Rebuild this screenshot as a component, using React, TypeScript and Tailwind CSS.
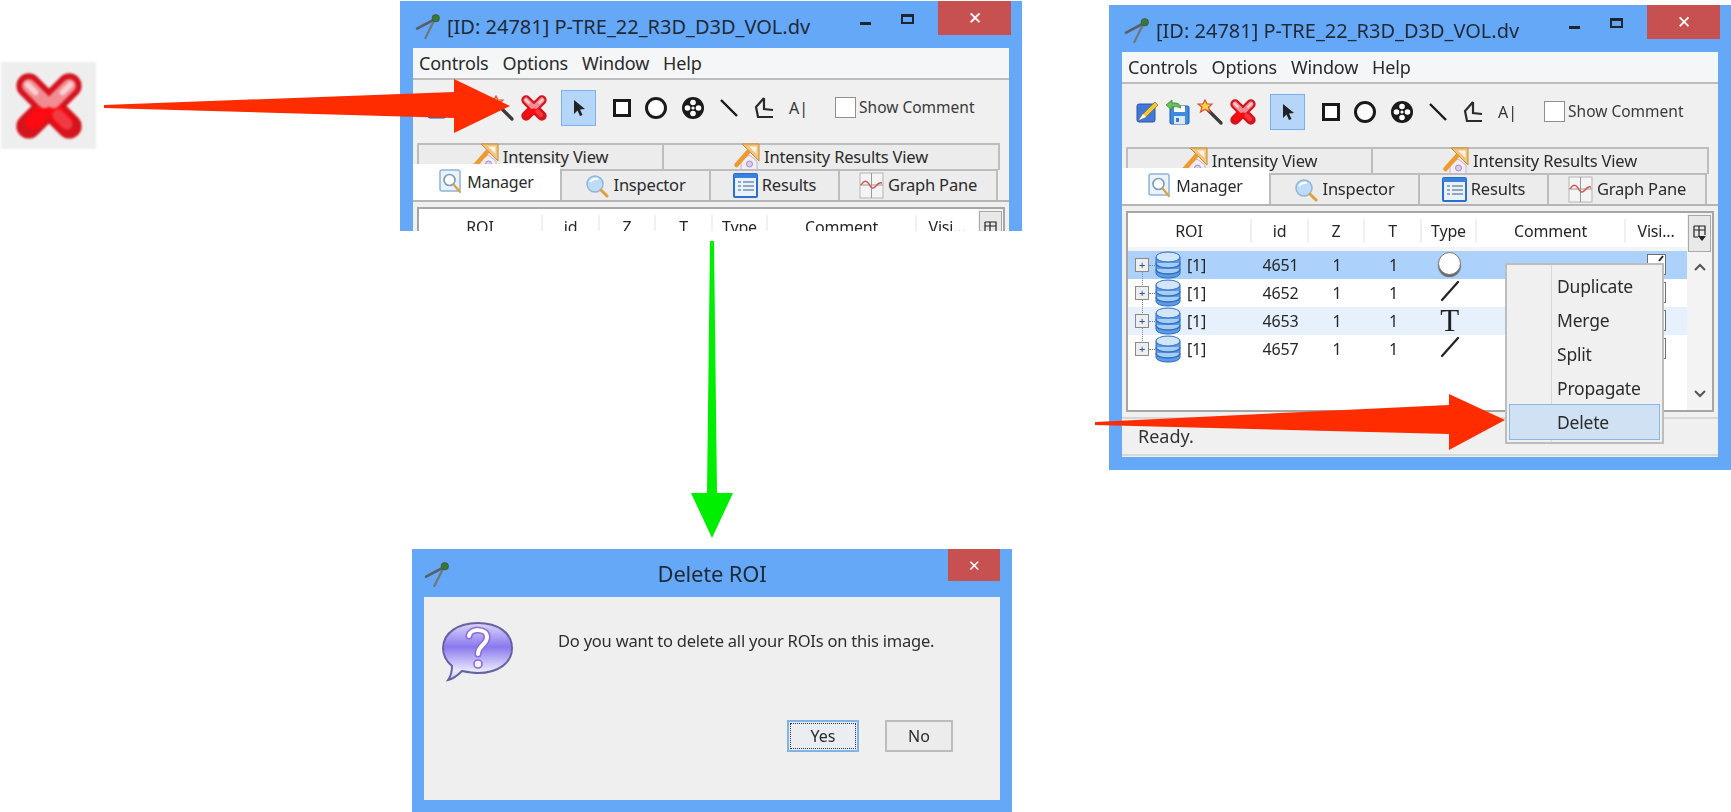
import { FC, ReactNode } from 'react';

const Logo: FC = () => (
  <svg width="27" height="27" viewBox="0 0 26 26" className="shrink-0">
    <path d="M19 6 L2 15" stroke="#56606a" strokeWidth="2.6" strokeLinecap="round" />
    <path d="M19 6 L10 24" stroke="#6d7780" strokeWidth="2.2" strokeLinecap="round" />
    <circle cx="20" cy="5" r="3.4" fill="#2f7d32" stroke="#4a5a4a" />
  </svg>
);

const RedX: FC<{ size: number }> = ({ size }) => (
  <svg width={size} height={size} viewBox="0 0 32 32" className="shrink-0">
    <path d="M7 7 L25 25 M25 7 L7 25" stroke="#d5141e" strokeWidth="11" strokeLinecap="round" />
    <path d="M9 23 L16 16 L23 23" stroke="#ff0a10" strokeWidth="7" strokeLinecap="round" strokeLinejoin="round" fill="none" />
    <path d="M24 24 L20 20" stroke="#f03a44" strokeWidth="5" strokeLinecap="round" />
    <path d="M7 7 L14 14 M25 7 L18 14" stroke="#f18c92" strokeWidth="6" strokeLinecap="round" />
    <path d="M6.5 6.5 L10 10 M25.5 6.5 L22 10" stroke="#fbd0d3" strokeWidth="2.6" strokeLinecap="round" />
  </svg>
);

const EditIcon: FC = () => (
  <svg width="24" height="24" viewBox="0 0 24 24" className="shrink-0">
    <rect x="2" y="4" width="18" height="18" rx="2" fill="#3f78d6" stroke="#2a55a8" />
    <path d="M4 20 L8 14 L20 2 L23 5 L11 17 Z" fill="#f4c63c" stroke="#9c7a18" strokeWidth="0.8" />
    <path d="M4 20 L8 14 L11 17 Z" fill="#ffffff" />
  </svg>
);

const SaveIcon: FC = () => (
  <svg width="26" height="26" viewBox="0 0 26 26" className="shrink-0">
    <rect x="5" y="7" width="19" height="18" rx="1.5" fill="#3f8be0" stroke="#1f5bb0" />
    <rect x="9" y="7" width="11" height="6" fill="#ffffff" />
    <rect x="9" y="17" width="11" height="8" fill="#dbe9f7" />
    <rect x="11" y="19" width="3" height="4" fill="#3f78c6" />
    <path d="M1 6 L7 1 L7 4 Q15 3 16 9 Q12 7 7 8 L7 11 Z" fill="#66c05c" stroke="#3b8a38" strokeWidth="0.8" />
  </svg>
);

const WandIcon: FC = () => (
  <svg width="26" height="26" viewBox="0 0 26 26" className="shrink-0">
    <path d="M11 11 L24 24" stroke="#3b3b3b" strokeWidth="3.2" strokeLinecap="round" />
    <path d="M8 1 L10 5 L15 5 L11.5 8.5 L13 13 L8 10.5 L3.5 13 L5 8 L1 5 L6 5 Z" fill="#fbd63a" stroke="#d8503a" strokeWidth="1.2" />
  </svg>
);

const MagnifierBox: FC = () => (
  <svg width="24" height="26" viewBox="0 0 24 26" className="shrink-0">
    <rect x="1" y="1" width="20" height="21" rx="2" fill="#eaf2fb" stroke="#8db4dc" strokeWidth="1.5" />
    <circle cx="10.5" cy="11" r="5.5" fill="#ffffff" stroke="#7f9bb8" strokeWidth="1.6" />
    <path d="M15 16 L21 23" stroke="#e0a040" strokeWidth="2.2" strokeLinecap="round" />
  </svg>
);

const MagnifierIcon: FC = () => (
  <svg width="24" height="24" viewBox="0 0 24 24" className="shrink-0">
    <circle cx="10" cy="10" r="8" fill="#bcdcf7" stroke="#8fb6d8" strokeWidth="1.5" />
    <path d="M5 8 Q8 4 13 5" stroke="#ffffff" strokeWidth="2" fill="none" />
    <path d="M16 16 L22 22" stroke="#e0a040" strokeWidth="3" strokeLinecap="round" />
  </svg>
);

const TableIcon: FC = () => (
  <svg width="25" height="25" viewBox="0 0 25 25" className="shrink-0">
    <rect x="1" y="1" width="23" height="23" rx="1" fill="#e9f1fb" stroke="#2a6fd0" strokeWidth="2" />
    <rect x="1" y="1" width="23" height="4" fill="#3b82dc" />
    <path d="M5 9 H8 M5 13 H8 M5 17 H8 M10 9 H21 M10 13 H21 M10 17 H21" stroke="#7a8ea8" strokeWidth="1.6" />
  </svg>
);

const GraphIcon: FC = () => (
  <svg width="25" height="27" viewBox="0 0 25 27" className="shrink-0">
    <rect x="1" y="1" width="23" height="25" fill="#f4f4f4" stroke="#b5b5b5" />
    <path d="M12.5 1 V26 M1 13 H24" stroke="#9a9a9a" />
    <path d="M2 13 Q6 6 10 12 Q13 19 17 14 Q20 10 23 11" stroke="#d9534f" strokeWidth="1.4" fill="none" />
  </svg>
);

const RulerIcon: FC = () => (
  <svg width="26" height="27" viewBox="0 0 26 27" className="shrink-0 -mt-[3px]">
    <path d="M7 27 V18 L15 12 L23 18 V27 Z" fill="#f3edf3" stroke="#c5b4cc" />
    <circle cx="15.5" cy="21" r="3" fill="#dccdea" stroke="#a08fbd" />
    <path d="M8 1 H25 V18 Z" fill="#f2c47e" stroke="#c98a30" />
    <path d="M15 3.5 H22.5 V11 Z" fill="#fbf4e6" />
    <path d="M2.5 22 L14 9" stroke="#ee9a2e" strokeWidth="4.5" strokeLinecap="round" />
  </svg>
);

const Db: FC = () => (
  <svg width="26" height="28" viewBox="0 0 26 28" className="shrink-0">
    <path d="M1 6 V22 C1 25 6 27 13 27 C20 27 25 25 25 22 V6 Z" fill="#5a9ae6" stroke="#2f6fc0" />
    <path d="M1 12 C1 15 6 17 13 17 C20 17 25 15 25 12" fill="#a8cdf5" stroke="#2f6fc0" strokeWidth="1.4" />
    <path d="M1 18 C1 21 6 23 13 23 C20 23 25 21 25 18" fill="#a8cdf5" stroke="#2f6fc0" strokeWidth="1.4" />
    <ellipse cx="13" cy="6" rx="12" ry="5" fill="#d4e6fb" stroke="#2f6fc0" />
  </svg>
);

const Tab: FC<{ icon: ReactNode; label: string; className: string }> = ({ icon, label, className }) => (
  <div className={`flex items-center justify-center gap-1 text-[#2b2b2b] ${className}`}>
    {icon}
    <span>{label}</span>
  </div>
);

const rows = [
  { id: '4651', type: 'circle', bg: 'bg-[#acd2fb]', check: true },
  { id: '4652', type: 'line', bg: 'bg-white', check: false },
  { id: '4653', type: 'text', bg: 'bg-[#e6f1fd]', check: false },
  { id: '4657', type: 'line', bg: 'bg-white', check: false },
];

const TypeCell: FC<{ type: string }> = ({ type }) => {
  if (type === 'circle')
    return <div className="w-[23px] h-[23px] rounded-full bg-white border border-[#777] -mt-1 shadow-[0_2px_1px_#666]" />;
  if (type === 'text')
    return <span className="font-['Liberation_Serif',serif] text-[31px] leading-[26px] text-[#222]">T</span>;
  return (
    <svg width="20" height="22" viewBox="0 0 20 22" className="-mt-1">
      <path d="M2 20 L18 2" stroke="#222" strokeWidth="2.2" strokeLinecap="round" />
    </svg>
  );
};

const ManagerWindow: FC<{ className: string }> = ({ className }) => (
  <div className={`absolute w-[622px] bg-[#66a8f8] overflow-hidden flex flex-col font-['Noto_Sans',sans-serif] blur-[0.5px] ${className}`}>
    <div className="h-[47px] shrink-0 flex items-start pl-[15px] pr-[11px]">
      <div className="mt-[12px]"><Logo /></div>
      <span className="ml-[5px] mt-[11px] text-[20px] leading-[30px] text-[#1f2a36] whitespace-nowrap">[ID: 24781] P-TRE_22_R3D_D3D_VOL.dv</span>
      <div className="ml-[50px] mt-[21px] w-[11px] h-[3px] bg-[#1d2530]" />
      <div className="ml-[30px] mt-[13px] w-[13px] h-[10px] border-2 border-t-[3px] border-[#1d2530]" />
      <div className="ml-auto w-[73px] h-[34px] bg-[#c75050] flex items-center justify-center text-white text-[17px]">✕</div>
    </div>
    <div className="mx-[13px] flex flex-col bg-[#f0f0f0] h-[405px]">
      <div className="h-[32px] shrink-0 bg-[#f5f6f7] border-b-2 border-[#bcbcbc] flex items-center gap-[14px] pl-[6px] text-[18px] text-[#2a2a2a] tracking-[-0.2px]">
        <span>Controls</span><span>Options</span><span>Window</span><span>Help</span>
      </div>
      <div className="h-[63px] shrink-0 flex items-center pl-[13px] pb-[8px]">
        <div className="flex items-center gap-[6px] w-[135px]">
          <EditIcon /><SaveIcon /><WandIcon /><RedX size={28} />
        </div>
        <div className="w-[35px] h-[36px] bg-[#b5d6f9] border border-[#79b3ef] flex items-center justify-center">
          <svg width="14" height="18" viewBox="0 0 14 18"><path d="M2 1 L2 15 L5.5 11.5 L8 17 L10.5 16 L8 10.5 L13 10 Z" fill="#222" /></svg>
        </div>
        <div className="ml-[17px] flex items-center gap-[14px]">
          <div className="w-[18px] h-[18px] border-[3px] border-[#1a1a1a] bg-white" />
          <div className="w-[22px] h-[22px] rounded-full border-[3px] border-[#1a1a1a] bg-white" />
          <svg width="24" height="24" viewBox="0 0 24 24">
            <circle cx="12" cy="12" r="11" fill="#1a1a1a" />
            <circle cx="12" cy="6.5" r="2.8" fill="#fff" /><circle cx="12" cy="17.5" r="2.8" fill="#fff" />
            <circle cx="6.5" cy="12" r="2.8" fill="#fff" /><circle cx="17.5" cy="12" r="2.8" fill="#fff" />
            <circle cx="12" cy="12" r="1.6" fill="#fff" />
          </svg>
          <svg width="20" height="20" viewBox="0 0 20 20"><path d="M2 2 L18 18" stroke="#1a1a1a" strokeWidth="2.4" /></svg>
          <svg width="22" height="24" viewBox="0 0 22 24"><path d="M11 2 L3 11 L5 21 L20 21 M11 2 L11 13 L20 14" stroke="#2a2a2a" strokeWidth="2.2" fill="none" /></svg>
          <span className="text-[16px] text-[#333]">A|</span>
        </div>
        <div className="ml-[27px] w-[21px] h-[21px] bg-white border border-[#8f8f8f]" />
        <span className="ml-[3px] text-[15.5px] text-[#3a3a3a]">Show Comment</span>
      </div>
      <div className="h-[27px] shrink-0 flex mx-[4px] text-[16.5px] tracking-[-0.2px]">
        <Tab icon={<RulerIcon />} label="Intensity View" className="w-[247px] bg-[#ececec] border-2 border-b-0 border-[#bdbdbd]" />
        <Tab icon={<RulerIcon />} label="Intensity Results View" className="w-[336px] bg-[#ececec] border-2 border-l-0 border-b-0 border-[#bdbdbd]" />
      </div>
      <div className="h-[32px] shrink-0 flex items-end text-[16.5px] tracking-[-0.2px] border-b-2 border-[#b5b5b5]">
        <Tab icon={<MagnifierBox />} label="Manager" className="relative z-10 w-[147px] h-[36px] -mt-[4px] bg-white text-[16px]" />
        <Tab icon={<MagnifierIcon />} label="Inspector" className="w-[151px] h-[31px] bg-[#ececec] border-x-2 border-t-2 border-[#bdbdbd]" />
        <Tab icon={<TableIcon />} label="Results" className="w-[129px] h-[31px] bg-[#ececec] border-r-2 border-t-2 border-[#bdbdbd]" />
        <Tab icon={<GraphIcon />} label="Graph Pane" className="w-[158px] h-[31px] bg-[#ececec] border-r-2 border-t-2 border-[#bdbdbd]" />
      </div>
      <div className="mt-[5px] mx-[4px] h-[201px] shrink-0 border-2 border-[#a6a6a6] bg-white flex text-[16px] text-[#262626] tracking-[-0.2px]">
        <div className="relative w-[559px] shrink-0">
          <div className="absolute left-[14px] top-[52px] h-[84px] border-l border-dotted border-[#888]" />
          <div className="h-[38px] pt-[2px] grid grid-cols-[124px_57px_56px_57px_55px_149px_60px] text-center items-center border-b-4 border-[#f4f4f4]">
            <span className="border-r-2 border-[#f0f0f0]">ROI</span>
            <span className="border-r-2 border-[#f0f0f0]">id</span>
            <span className="border-r-2 border-[#f0f0f0]">Z</span>
            <span className="border-r-2 border-[#f0f0f0]">T</span>
            <span className="border-r-2 border-[#f0f0f0]">Type</span>
            <span className="border-r-2 border-[#f0f0f0]">Comment</span>
            <span>Visi...</span>
          </div>
          {rows.map((r) => (
            <div key={r.id} className={`h-[28px] grid grid-cols-[124px_57px_56px_57px_55px_149px_60px] text-center items-center ${r.bg}`}>
              <div className="relative flex items-center pl-[7px]">
                <div className="w-[14px] h-[14px] border border-[#8a8a8a] bg-[#eee] text-[11px] leading-[12px] text-[#2a4aa0]">+</div>
                <div className="w-[6px] border-t border-dotted border-[#888]" />
                <Db />
                <span className="ml-[6px]">[1]</span>
              </div>
              <span>{r.id}</span>
              <span>1</span>
              <span>1</span>
              <div className="flex justify-center"><TypeCell type={r.type} /></div>
              <span />
              <div className="flex justify-end pr-[20px]">
                <div className="relative w-[19px] h-[21px] bg-white border border-[#6f6f6f] -mt-[2px]">
                  {r.check && (
                    <svg width="8" height="8" viewBox="0 0 8 8" className="absolute right-0 top-0">
                      <path d="M2 6 L6 1" stroke="#222" strokeWidth="2" />
                    </svg>
                  )}
                </div>
              </div>
            </div>
          ))}
        </div>
        <div className="flex-1 flex flex-col items-center bg-[#f3f3f3]">
          <div className="w-[23px] h-[37px] mt-[2px] bg-[#e8e8e8] border border-[#a8a8a8] flex items-center justify-center">
            <svg width="16" height="18" viewBox="0 0 16 18">
              <path d="M2 1 H13 V10 M2 1 V12 H6 M2 5 H13 M7 1 V12" stroke="#222" strokeWidth="1.2" fill="none" />
              <path d="M6 11 H14 L10 16 Z" fill="#222" />
            </svg>
          </div>
          <svg width="14" height="10" viewBox="0 0 14 10" className="mt-[10px]"><path d="M2 8 L7 3 L12 8" stroke="#555" strokeWidth="2" fill="none" /></svg>
          <svg width="14" height="10" viewBox="0 0 14 10" className="mt-auto mb-[11px]"><path d="M2 2 L7 7 L12 2" stroke="#555" strokeWidth="2" fill="none" /></svg>
        </div>
      </div>
      <div className="mt-[5px] h-[39px] shrink-0 border-y-2 border-[#d8d8d8] flex items-center pl-[16px] text-[18px] text-[#333]">Ready.</div>
    </div>
  </div>
);

const menuItems = ['Duplicate', 'Merge', 'Split', 'Propagate'];

const RoiMenu: FC = () => (
  <div className="absolute left-[1505px] top-[263px] w-[159px] h-[181px] bg-[#f0f0f0] border-2 border-[#bdbdbd] pt-[4px] px-[2px] font-['Noto_Sans',sans-serif] text-[17.5px] text-[#2c2c2c] tracking-[-0.2px] blur-[0.5px]">
    <div className="absolute left-[44px] top-0 bottom-0 w-px bg-[#d8d8d8]" />
    {menuItems.map((m) => (
      <div key={m} className="h-[34px] flex items-center pl-[48px]">{m}</div>
    ))}
    <div className="relative h-[36px] -mt-[1px] flex items-center pl-[47px] bg-[#cfe1f2] border border-[#8ab8e6]">Delete</div>
  </div>
);

const DeleteDialog: FC = () => (
  <div className="absolute left-[412px] top-[549px] w-[600px] h-[263px] bg-[#66a8f8] flex flex-col font-['Noto_Sans',sans-serif] blur-[0.5px]">
    <div className="relative h-[48px] shrink-0 flex items-center justify-center">
      <div className="absolute left-[12px] top-[12px]"><Logo /></div>
      <span className="text-[22px] text-[#1f2a36] tracking-[-0.2px]">Delete ROI</span>
      <div className="absolute right-[12px] top-0 w-[52px] h-[32px] bg-[#c75050] flex items-center justify-center text-white text-[15px]">✕</div>
    </div>
    <div className="mx-[12px] h-[203px] bg-[#efefef] flex flex-col">
      <div className="flex items-start pl-[18px] pt-[24px]">
        <svg width="72" height="62" viewBox="0 0 72 62" className="shrink-0">
          <defs>
            <linearGradient id="bubble" x1="0" y1="0" x2="0" y2="1">
              <stop offset="0" stopColor="#dcd6fb" />
              <stop offset="0.42" stopColor="#8a78ee" />
              <stop offset="0.85" stopColor="#ecebff" />
              <stop offset="1" stopColor="#c8c2f2" />
            </linearGradient>
          </defs>
          <path d="M36 2 C56 2 70 12 70 27 C70 42 56 52 36 52 C30 52 25 51 20 50 C16 54 11 58 6 59 C9 55 10 50 10 45 C4 40 1 34 1 27 C1 12 16 2 36 2 Z" fill="url(#bubble)" stroke="#6464a0" strokeWidth="2" />
          <path d="M27 15 C28 7 45 7 45 16 C45 24 36 24 36 33" stroke="#8a6cd8" strokeWidth="7" fill="none" strokeLinecap="round" />
          <path d="M27 15 C28 7 45 7 45 16 C45 24 36 24 36 33" stroke="#ffffff" strokeWidth="4" fill="none" strokeLinecap="round" />
          <circle cx="36" cy="43" r="4" fill="#f6f2ff" stroke="#8a6cd8" strokeWidth="1.6" />
        </svg>
        <span className="ml-[44px] mt-[8px] text-[16.5px] text-[#2f2f2f] whitespace-nowrap tracking-[-0.22px]">Do you want to delete all your ROIs on this image.</span>
      </div>
      <div className="mt-[37px] flex justify-end gap-[26px] pr-[47px] text-[16px] text-[#2a2a2a]">
        <div className="w-[72px] h-[32px] border-2 border-[#7eb4ea] bg-[#eaeef3] p-[1px]">
          <div className="w-full h-full border border-dotted border-[#333] flex items-center justify-center">Yes</div>
        </div>
        <div className="w-[68px] h-[32px] border-2 border-[#bcbcbc] bg-[#ececec] flex items-center justify-center">No</div>
      </div>
    </div>
  </div>
);

const App: FC = () => (
  <div className="relative w-[1731px] h-[812px] bg-white overflow-hidden">
    <div className="absolute left-[1px] top-[62px] w-[95px] h-[87px] bg-[#eeeeee] flex items-center justify-center blur-[1px]">
      <RedX size={72} />
    </div>
    <ManagerWindow className="left-[400px] top-[1px] h-[230px]" />
    <ManagerWindow className="left-[1109px] top-[5px] h-[465px]" />
    <RoiMenu />
    <DeleteDialog />
    <svg className="absolute left-0 top-0 pointer-events-none" width="1731" height="812" viewBox="0 0 1731 812">
      <path d="M104 105 L454 92 L454 79 L510 106 L454 133 L454 118 L104 108 Z" fill="#ff2c00" />
      <path d="M1095 422 L1449 405 L1449 394 L1505 420 L1449 450 L1449 434 L1095 425 Z" fill="#ff2c00" />
      <path d="M710 241 L714 241 L717 493 L733 493 L712 538 L691 493 L707 493 Z" fill="#00ee00" />
    </svg>
  </div>
);

export default App;
